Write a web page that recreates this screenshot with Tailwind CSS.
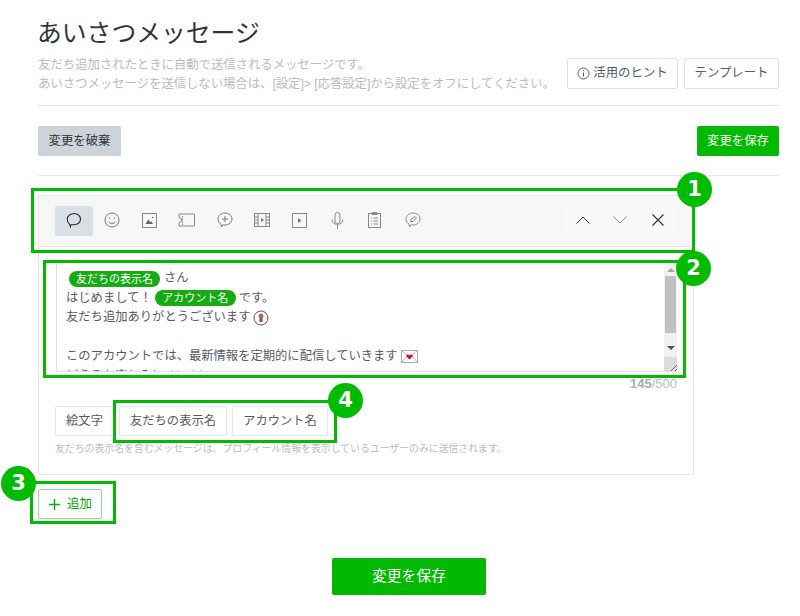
<!DOCTYPE html>
<html lang="ja">
<head>
    <meta charset="UTF-8">
    <meta name="viewport" content="width=device-width, initial-scale=1.0">
    <title>あいさつメッセージ</title>
    <script src="https://cdn.jsdelivr.net/npm/@tailwindcss/browser@4"></script>
</head>
<body class="bg-white">
<div class="relative w-[800px] h-[616px] overflow-hidden pl-[38px] pr-[21px] text-[#555b66] font-['Liberation_Sans','Noto_Sans_CJK_JP',sans-serif]">

    <!-- header -->
    <div class="pt-[17px] h-[106px] border-b border-[#e6e8eb]">
        <h1 class="text-[24.8px] leading-[34px] text-[#2f343b] font-normal ml-[-1px]">あいさつメッセージ</h1>
        <div class="flex justify-between mt-[4px]">
            <p class="text-[12.5px] leading-[19px] text-[#b7bcc3] tracking-[-0.15px] pt-[1px]">友だち追加されたときに自動で送信されるメッセージです。<br>あいさつメッセージを送信しない場合は、[設定]&gt; [応答設定]から設定をオフにしてください。</p>
            <div class="flex gap-[6px] mt-[3px]">
                <button class="h-[31px] w-[111px] flex items-center justify-center gap-[3px] border border-[#dfe2e6] rounded-[2px] text-[12.4px] text-[#555b66]">
                    <svg class="w-[13px] h-[13px]" viewBox="0 0 13 13" fill="none" stroke="#555b66"><circle cx="6.5" cy="6.5" r="5.5"/><path d="M6.5 5.500v4M6.500 3.200v1"/></svg>
                    活用のヒント
                </button>
                <button class="h-[31px] w-[95px] border border-[#dfe2e6] rounded-[2px] text-[12.4px] text-[#555b66]">テンプレート</button>
            </div>
        </div>
    </div>

    <!-- action bar -->
    <div class="h-[70px] border-b border-[#e6e8eb] flex justify-between items-start pt-[20px]">
        <button class="h-[30px] w-[83px] bg-[#ced2d9] rounded-[2px] text-[12.4px] text-[#2f343b]">変更を破棄</button>
        <button class="h-[30px] w-[82px] bg-[#00b900] rounded-[2px] text-[12.4px] text-white">変更を保存</button>
    </div>

    <!-- message card -->
    <div class="mt-[19px] w-[656px] h-[280px] border border-[#e3e6ea]">
        <div class="h-[51px] bg-[#f7f7f7] border-b border-[#e3e6ea] pl-[16px] pr-[17px] pt-[10px] flex justify-between">
            <div class="flex">
                <div class="w-[38px] h-[30px] pb-[2px] bg-[#dadee5] rounded-[2px] flex items-center justify-center">
                    <svg class="w-[16px] h-[16px]" viewBox="0 0 16 16" fill="none" stroke="#1f2a37" stroke-width="1.1"><path d="M8 1.500c3.700 0 6.500 2.500 6.500 5.700 0 3-2.800 5.500-6.500 5.500H5l-.6 2-.9-2.600C2 11 1.300 9.300 1.300 7.200 1.300 4 4.300 1.500 8 1.500z"/></svg>
                </div>
                <div class="w-[37.6px] h-[30px] pb-[2px] flex items-center justify-center">
                    <svg class="w-[16px] h-[16px]" viewBox="0 0 16 16" fill="none" stroke="#777" stroke-width="1"><circle cx="8" cy="8" r="7"/><path d="M5.600 5.500v1.500M10.400 5.500v1.500"/><path d="M4.500 9.700c1 2.300 6 2.300 7 0"/></svg>
                </div>
                <div class="w-[37.6px] h-[30px] pb-[2px] flex items-center justify-center">
                    <svg class="w-[15px] h-[15px]" viewBox="0 0 15 15" fill="none" stroke="#888" stroke-width="1"><rect x=".5" y=".5" width="14" height="14"/><path d="M3.500 11l2.800-4.500 2 2.800 1-1 1.700 2.700z" fill="#666" stroke="none"/><path d="M10 4.500h1.500" stroke="#666"/></svg>
                </div>
                <div class="w-[37.6px] h-[30px] pb-[2px] flex items-center justify-center">
                    <svg class="w-[17px] h-[14px]" viewBox="0 0 17 14" fill="none" stroke="#888" stroke-width="1"><path d="M1 1l15.500 0v12H1v-3.500a1.500 1.500 0 0 0 0-5zM4.500 2v10" stroke-dasharray="none"/><path d="M4.500 2v10" stroke="#f7f7f7" stroke-dasharray="1 1.500"/></svg>
                </div>
                <div class="w-[37.6px] h-[30px] pb-[2px] flex items-center justify-center">
                    <svg class="w-[16px] h-[16px]" viewBox="0 0 16 16" fill="none" stroke="#777" stroke-width="1"><path d="M8 1c3.900 0 7 2.700 7 6s-3.100 6-7 6H5.500l-1 2-.5-2.800C2 11 1 9.200 1 7c0-3.300 3.100-6 7-6z"/><path d="M5 7h6M8 4v6"/></svg>
                </div>
                <div class="w-[37.6px] h-[30px] pb-[2px] flex items-center justify-center">
                    <svg class="w-[16px] h-[14px]" viewBox="0 0 16 14" fill="none" stroke="#888" stroke-width="1"><rect x=".5" y=".5" width="15" height="13"/><path d="M4 .5v13M12 .5v13M.5 4H4M.5 7H4M.5 10H4M12 4h3.500M12 7h3.500M12 10h3.500"/><path d="M7 5l3 2-3 2z" fill="#777" stroke="none"/></svg>
                </div>
                <div class="w-[37.6px] h-[30px] pb-[2px] flex items-center justify-center">
                    <svg class="w-[15px] h-[15px]" viewBox="0 0 15 15" fill="none" stroke="#888" stroke-width="1"><rect x=".5" y=".5" width="14" height="14"/><path d="M6 5l3.500 2.500L6 10z" fill="#777" stroke="none"/></svg>
                </div>
                <div class="w-[37.6px] h-[30px] pb-[2px] flex items-center justify-center">
                    <svg class="w-[13px] h-[17px]" viewBox="0 0 13 17" fill="none" stroke="#888" stroke-width="1"><rect x="4" y=".5" width="5" height="11" rx="2.500"/><path d="M1 7.500c0 6.500 11 6.500 11 0M6.500 13v4"/></svg>
                </div>
                <div class="w-[37.6px] h-[30px] pb-[2px] flex items-center justify-center">
                    <svg class="w-[13px] h-[16px]" viewBox="0 0 13 16" fill="none" stroke="#888" stroke-width="1"><rect x=".5" y="1.500" width="12" height="14"/><path d="M4 .5h5v2H4zM3 6h1M3 9h1M3 12h1M5.500 6H10M5.500 9H10M5.500 12H10"/></svg>
                </div>
                <div class="w-[37.6px] h-[30px] pb-[2px] flex items-center justify-center">
                    <svg class="w-[16px] h-[16px]" viewBox="0 0 16 16" fill="none" stroke="#888" stroke-width="1"><path d="M8 1c3.900 0 7 2.700 7 6s-3.100 6-7 6H5.500l-1 2-.5-2.800C2 11 1 9.200 1 7c0-3.300 3.100-6 7-6z"/><path d="M5.500 9.500l.5-2 4-3 1.500 1.500-3.500 3.500z"/></svg>
                </div>
            </div>
            <div class="flex gap-px">
                <div class="w-[37px] h-[30px] pb-[2px] bg-[#f9f9f9] flex items-center justify-center">
                    <svg class="w-[14px] h-[8px]" viewBox="0 0 14 8" fill="none" stroke="#2f343b" stroke-width="1"><path d="M.5 7.500L7 1l6.500 6.500"/></svg>
                </div>
                <div class="w-[36px] h-[30px] pb-[2px] bg-[#f9f9f9] flex items-center justify-center">
                    <svg class="w-[14px] h-[8px]" viewBox="0 0 14 8" fill="none" stroke="#888" stroke-width="1"><path d="M.5.500L7 7l6.500-6.500"/></svg>
                </div>
                <div class="w-[37px] h-[30px] pb-[2px] bg-[#f9f9f9] flex items-center justify-center">
                    <svg class="w-[12px] h-[12px]" viewBox="0 0 12 12" fill="none" stroke="#2f343b" stroke-width="1.100"><path d="M.5.500l11 11M11.500.5l-11 11"/></svg>
                </div>
            </div>
        </div>

        <div class="px-[17px] pt-[15px]">
            <!-- textarea -->
            <div class="relative h-[110px] w-[621px] border-l border-b border-[#dfe2e6] overflow-hidden pl-[9px] text-[12.3px] leading-[19.5px]">
                <div class="h-[19.500px] mt-[7px] flex items-center">
                    <span class="ml-[3px] h-[16px] w-[91px] rounded-full bg-[#16ab13] text-white text-[11px] leading-[16px] text-center">友だちの表示名</span>
                    <span class="ml-[4px]">さん</span>
                </div>
                <div class="h-[19.500px] flex items-center">
                    <span>はじめまして！</span>
                    <span class="ml-[3px] h-[16px] w-[81px] rounded-full bg-[#16ab13] text-white text-[11px] leading-[16px] text-center">アカウント名</span>
                    <span class="ml-[3px]">です。</span>
                </div>
                <div class="h-[19.500px] flex items-center">
                    <span>友だち追加ありがとうございます</span>
                    <svg class="ml-[3px] w-[16px] h-[16px]" viewBox="0 0 16 16" fill="none"><circle cx="8" cy="8" r="7" stroke="#555" fill="#fff"/><circle cx="8" cy="6" r="2.500" fill="#8a7a70"/><rect x="6.500" y="8" width="3" height="4" rx="1" fill="#d22"/></svg>
                </div>
                <div class="h-[19.500px]"></div>
                <div class="h-[19.500px] flex items-center">
                    <span>このアカウントでは、最新情報を定期的に配信していきます</span>
                    <svg class="ml-[3px] w-[17px] h-[13px]" viewBox="0 0 17 13" fill="none"><rect x=".5" y=".5" width="16" height="12" fill="#fff" stroke="#aaa"/><path d="M.5.5l8 6 8-6M.5 12.500l6-7M16.500 12.500l-6-7" stroke="#bbb"/><path d="M8.500 9.500L5.500 6.500c-1-2 2-3 3-1 1-2 4-1 3 1z" fill="#d3122a"/></svg>
                </div>
                <div class="h-[19.500px] flex items-center">
                    <span>どうぞお楽しみに</span>
                    <svg class="ml-[3px] w-[16px] h-[16px] shrink-0" viewBox="0 0 14 13"><path d="M7 12L1.500 6.500C-.5 3 5 0 7 3.500 9 0 14.500 3 12.500 6.500z" fill="#c8102e"/></svg>
                    <svg class="ml-[8px] w-[12px] h-[16px] shrink-0" viewBox="0 0 12 13" fill="none" stroke="#2f8f4a" stroke-width="1.200"><path d="M2 1l4 10 4-10"/></svg>
                </div>
                <!-- scrollbar -->
                <div class="absolute top-0 right-0 bottom-0 w-[13px] bg-[#f1f1f1] flex flex-col items-center">
                    <div class="mt-[6px] h-0 w-0 border-x-[4px] border-x-transparent border-b-[4px] border-b-[#a3a3a3]"></div>
                    <div class="mt-[4px] h-[57px] w-[11px] bg-[#c1c1c1]"></div>
                    <div class="mt-[13px] h-0 w-0 border-x-[4px] border-x-transparent border-t-[4px] border-t-[#505050]"></div>
                    <div class="mt-auto h-[14px] w-[14px] bg-[#dcdcdc] flex items-end justify-end">
                        <svg class="w-[8px] h-[8px]" viewBox="0 0 8 8" fill="none" stroke="#666"><path d="M1 8l7-7M5 8l3-3"/></svg>
                    </div>
                </div>
            </div>
            <div class="w-[621px] text-right text-[13px] leading-[14px] mt-[5px] text-[#b7bcc3]"><span class="font-bold text-[#a6adb6]">145</span>/500</div>

            <div class="flex gap-[5px] mt-[15px] ml-[-1px]">
                <button class="h-[30px] w-[59px] border border-[#e3e6ea] rounded-[2px] text-[12.3px]">絵文字</button>
                <button class="h-[30px] w-[108px] border border-[#e3e6ea] rounded-[2px] text-[12.3px]">友だちの表示名</button>
                <button class="h-[30px] w-[96px] border border-[#e3e6ea] rounded-[2px] text-[12.3px]">アカウント名</button>
            </div>
            <p class="mt-[6px] ml-[-1px] text-[9.87px] leading-[14px] text-[#b7bcc3]">友だちの表示名を含むメッセージは、プロフィール情報を表示しているユーザーのみに送信されます。</p>
        </div>
    </div>

    <button class="mt-[14px] h-[30px] w-[64px] flex items-center justify-center gap-[7px] border border-[#8fdc8f] rounded-[2px] text-[12.5px] text-[#00a800] pl-[1px]">
        <svg class="w-[11px] h-[11px]" viewBox="0 0 11 11" fill="none" stroke="#00b900" stroke-width="1.500"><path d="M5.500 0v11M0 5.500h11"/></svg>
        追加
    </button>

    <div class="mt-[39px] ml-[294px]">
        <button class="h-[37px] w-[154px] bg-[#00b900] rounded-[2px] text-[14.8px] text-white">変更を保存</button>
    </div>

    <!-- annotation overlays -->
    <div class="absolute left-[31px] top-[188px] w-[664px] h-[65px] border-[3px] border-[#00bb00]"></div>
    <div class="absolute left-[43px] top-[260px] w-[643px] h-[118px] border-[3px] border-[#00bb00]"></div>
    <div class="absolute left-[113px] top-[400px] w-[224px] h-[43px] border-[3px] border-[#00bb00]"></div>
    <div class="absolute left-[30px] top-[481px] w-[86px] h-[43px] border-[3px] border-[#00bb00]"></div>
    <div class="absolute left-[677px] top-[172px] w-[35px] h-[35px] rounded-full bg-[#00bb00] text-white text-[21px] font-bold flex items-center justify-center font-['DejaVu_Sans',sans-serif]">1</div>
    <div class="absolute left-[676px] top-[251px] w-[35px] h-[35px] rounded-full bg-[#00bb00] text-white text-[21px] font-bold flex items-center justify-center font-['DejaVu_Sans',sans-serif]">2</div>
    <div class="absolute left-[1px] top-[466px] w-[35px] h-[35px] rounded-full bg-[#00bb00] text-white text-[21px] font-bold flex items-center justify-center font-['DejaVu_Sans',sans-serif]">3</div>
    <div class="absolute left-[328px] top-[383px] w-[35px] h-[35px] rounded-full bg-[#00bb00] text-white text-[21px] font-bold flex items-center justify-center font-['DejaVu_Sans',sans-serif]">4</div>
</div>
</body>
</html>
